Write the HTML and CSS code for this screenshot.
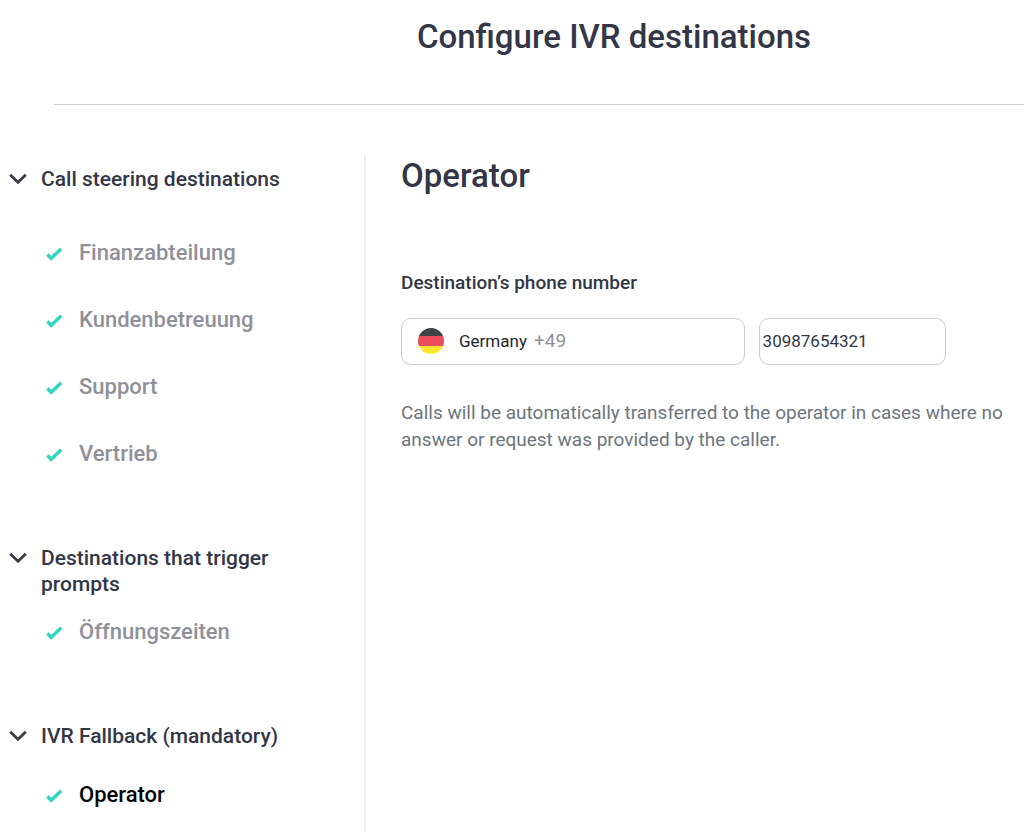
FILE: index.html
```html
<!DOCTYPE html>
<html lang="en">
<head>
    <meta charset="UTF-8">
    <meta name="viewport" content="width=device-width, initial-scale=1.0">
    <title>Configure IVR destinations</title>
    <link rel="stylesheet" href="styles.css">
</head>
<body>
    <!-- Shared icons -->
    <svg class="icon-defs" aria-hidden="true">
        <symbol id="chevron" viewBox="0 0 18 12">
            <path d="M1.200 1.800L9 9.300l7.800-7.500" fill="none" stroke="currentColor" stroke-width="2.800"/>
        </symbol>
        <symbol id="check" viewBox="0 0 18 14">
            <path d="M1.500 7.500l4 4L16 1.500" fill="none" stroke="currentColor" stroke-width="3.600"/>
        </symbol>
    </svg>

    <header class="page-header">
        <h1>Configure IVR destinations</h1>
    </header>

    <div class="layout">
        <nav class="sidebar" aria-label="Destinations">
            <section class="group">
                <h2>
                    <button type="button" class="group-title" aria-expanded="true">
                        <svg class="chevron"><use href="#chevron"/></svg>
                        <span>Call steering destinations</span>
                    </button>
                </h2>
                <ul>
                    <li><a href="#finanzabteilung"><svg class="check"><use href="#check"/></svg>Finanzabteilung</a></li>
                    <li><a href="#kundenbetreuung"><svg class="check"><use href="#check"/></svg>Kundenbetreuung</a></li>
                    <li><a href="#support"><svg class="check"><use href="#check"/></svg>Support</a></li>
                    <li><a href="#vertrieb"><svg class="check"><use href="#check"/></svg>Vertrieb</a></li>
                </ul>
            </section>

            <section class="group">
                <h2>
                    <button type="button" class="group-title" aria-expanded="true">
                        <svg class="chevron"><use href="#chevron"/></svg>
                        <span>Destinations that trigger prompts</span>
                    </button>
                </h2>
                <ul>
                    <li><a href="#oeffnungszeiten"><svg class="check"><use href="#check"/></svg>Öffnungszeiten</a></li>
                </ul>
            </section>

            <section class="group group-fallback">
                <h2>
                    <button type="button" class="group-title" aria-expanded="true">
                        <svg class="chevron"><use href="#chevron"/></svg>
                        <span>IVR Fallback (mandatory)</span>
                    </button>
                </h2>
                <ul>
                    <li><a href="#operator" class="active" aria-current="page"><svg class="check"><use href="#check"/></svg>Operator</a></li>
                </ul>
            </section>
        </nav>

        <main class="content" id="operator">
            <h2>Operator</h2>
            <form>
                <label for="phone">Destination’s phone number</label>
                <div class="phone-row">
                    <button type="button" class="country" aria-haspopup="listbox">
                        <svg class="flag" viewBox="0 0 26 26" aria-hidden="true">
                            <clipPath id="flag-circle"><circle cx="13" cy="13" r="13"/></clipPath>
                            <g clip-path="url(#flag-circle)">
                                <rect width="26" height="8" fill="#3e4347"/>
                                <rect y="8" width="26" height="10" fill="#ed4c5c"/>
                                <rect y="18" width="26" height="8" fill="#ffe62e"/>
                            </g>
                        </svg>
                        <span>Germany</span>
                        <span class="dial-code">+49</span>
                    </button>
                    <input type="tel" id="phone" class="phone" value="30987654321">
                </div>
                <p class="hint">Calls will be automatically transferred to the operator in cases where no answer or request was provided by the caller.</p>
            </form>
        </main>
    </div>

    <script>
        document.querySelectorAll('.group-title').forEach(title => {
            title.addEventListener('click', () => {
                const list = title.parentElement.nextElementSibling;
                list.hidden = !list.hidden;
                title.setAttribute('aria-expanded', String(!list.hidden));
            });
        });
    </script>
</body>
</html>
```
FILE: styles.css
```css
* {
    box-sizing: border-box;
}
body {
    margin: 0;
    min-height: 100vh;
    display: flex;
    flex-direction: column;
    font-family: Roboto, "Liberation Sans", sans-serif;
    color: #323646;
    background-color: #fff;
}
h1, h2, p, ul {
    margin: 0;
    padding: 0;
}
h1, h2 {
    font-weight: 500;
}
button, input {
    font-family: inherit;
    color: inherit;
    background: none;
}
.icon-defs {
    display: none;
}
.page-header {
    margin-left: 54px;
    padding: 17px 0 47px 150px;
    border-bottom: 1px solid #c9cccc;
    text-align: center;
}
.page-header h1, .content h2 {
    font-size: 33px;
    line-height: 40px;
}
.layout {
    display: flex;
    flex: 1;
    margin-top: 49px;
}
.sidebar {
    flex: 0 0 366px;
    padding: 12px 80px 0 9px;
    border-right: 2px solid #f0f0f1;
}
.group {
    margin-bottom: 58px;
}
.group h2 {
    min-height: 53px;
}
.group-title {
    display: flex;
    align-items: flex-start;
    gap: 14px;
    padding: 0;
    border: none;
    font-size: 21px;
    font-weight: 500;
    line-height: 26px;
    text-align: left;
    cursor: pointer;
}
.chevron {
    flex: none;
    width: 18px;
    height: 12px;
    margin-top: 7px;
    color: #3a3c46;
}
.group ul {
    list-style-type: none;
}
.group a {
    display: flex;
    align-items: center;
    gap: 16px;
    height: 67px;
    padding-left: 37px;
    font-size: 22px;
    font-weight: 500;
    color: #8f909a;
    text-decoration: none;
}
.group a.active {
    color: #000;
}
.check {
    flex: none;
    width: 17px;
    height: 14px;
    margin-top: 3px;
    color: #2fd6bd;
}
.group-fallback {
    margin-bottom: 0;
}
.group-fallback h2 {
    min-height: 38px;
}
.content {
    flex: 1;
    padding: 2px 10px 0 35px;
}
.content label {
    display: block;
    margin-top: 74px;
    font-size: 19px;
    font-weight: 500;
    line-height: 26px;
}
.phone-row {
    display: grid;
    grid-template-columns: minmax(0, 11fr) minmax(0, 6fr);
    gap: 14px;
    margin-top: 22px;
    padding-right: 68px;
}
.country, .phone {
    height: 47px;
    border: 1px solid #c9cbcd;
    border-radius: 10px;
    font-size: 17px;
}
.country {
    display: flex;
    align-items: center;
    padding: 0 16px 2px;
    color: #23252b;
    cursor: pointer;
}
.flag {
    width: 26px;
    height: 26px;
    margin-right: 15px;
}
.dial-code {
    margin-left: 7px;
    font-size: 19px;
    color: #8f909a;
}
.phone {
    padding: 0 3px 2px;
}
.hint {
    margin-top: 34px;
    font-size: 19px;
    line-height: 27px;
    color: #6c757d;
}
```
